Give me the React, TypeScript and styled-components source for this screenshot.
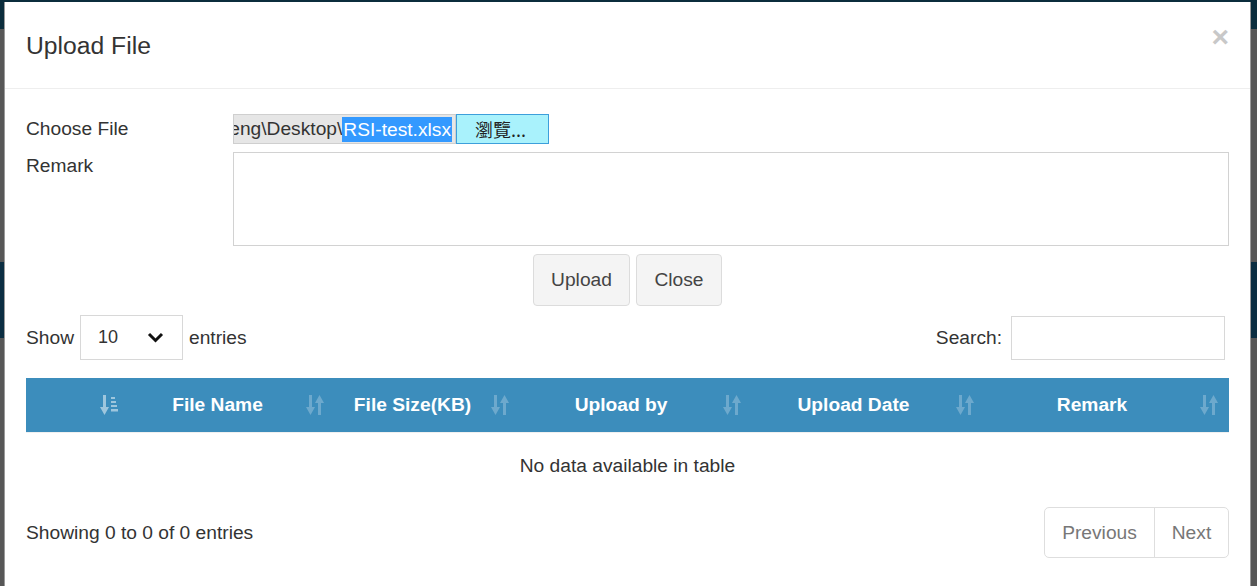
import React from "react";
import styled, { createGlobalStyle } from "styled-components";

const Global = createGlobalStyle`
  html, body { margin: 0; padding: 0; }
  body { font-family: "Liberation Sans", Arial, sans-serif; color: #333; }
  * { box-sizing: border-box; }
`;

const Backdrop = styled.div`
  height: 586px;
  overflow: hidden;
  padding: 2px 6px 0 4px;
  background: linear-gradient(
    to bottom,
    #0b2d3c 0px,
    #0b2d3c 29px,
    #575757 29px,
    #575757 262px,
    #0b2e42 262px,
    #0b2e42 338px,
    #575757 338px
  );
`;

const Modal = styled.div`
  height: 584px;
  background: #fff;
  border-left: 1px solid #9a9a9a;
  border-right: 1px solid #9a9a9a;
  display: flex;
  flex-direction: column;
`;

const Header = styled.div`
  height: 87px;
  border-bottom: 1px solid #eeeeee;
  padding: 0 21px 0 21px;
  display: flex;
  align-items: center;
  justify-content: space-between;
`;

const Title = styled.h4`
  margin: 0;
  font-size: 24.7px;
  font-weight: normal;
  color: #333;
  padding-top: 1px;
`;

const CloseX = styled.span`
  font-size: 30px;
  font-weight: bold;
  color: #c8c8c8;
  line-height: 1;
  margin-top: -16px;
`;

const Body = styled.div`
  padding: 25px 21px 0 21px;
  display: flex;
  flex-direction: column;
`;

const FormRow = styled.div<{ $gap?: number }>`
  display: flex;
  align-items: flex-start;
  margin-top: ${(p) => p.$gap ?? 0}px;
`;

const Label = styled.label<{ $lh: number }>`
  width: 207px;
  flex: none;
  font-size: 19.2px;
  line-height: ${(p) => p.$lh}px;
`;

const FileBox = styled.div`
  display: flex;
  height: 30px;
`;

const FilePath = styled.div`
  width: 223px;
  height: 30px;
  background: #e6e6e6;
  border: 1px solid #cfcfcf;
  display: flex;
  justify-content: flex-end;
  align-items: center;
  overflow: hidden;
  white-space: nowrap;
  font-size: 19.2px;
  padding-right: 3px;
`;

const Selected = styled.span`
  background: #3399ff;
  color: #fff;
  line-height: 25px;
  padding: 0 1px;
`;

const Browse = styled.button`
  width: 93px;
  height: 30px;
  background: #a9f2fc;
  border: 1.5px solid #3d9fdb;
  font-family: "Noto Sans CJK TC", "Liberation Sans", sans-serif;
  font-size: 18px;
  color: #222;
  padding: 0 4px 0 0;
  line-height: 1;
`;

const TextArea = styled.textarea`
  flex: 1;
  height: 94px;
  border: 1px solid #d2d2d2;
  resize: none;
  font-family: inherit;
`;

const ButtonRow = styled.div`
  display: flex;
  justify-content: center;
  gap: 6px;
  margin-top: 8px;
`;

const Btn = styled.button<{ $w: number }>`
  width: ${(p) => p.$w}px;
  height: 52px;
  background: #f4f4f4;
  border: 1px solid #dcdcdc;
  border-radius: 4px;
  font-family: inherit;
  font-size: 19.2px;
  color: #444;
  padding: 0;
`;

const Controls = styled.div`
  display: flex;
  justify-content: space-between;
  align-items: center;
  margin-top: 9px;
  height: 45px;
`;

const Inline = styled.div`
  display: flex;
  align-items: center;
  font-size: 19.2px;
`;

const SelectBox = styled.div`
  width: 103px;
  height: 45px;
  border: 1px solid #d8d8d8;
  margin: 0 6px;
  display: flex;
  align-items: center;
  justify-content: space-between;
  padding: 0 18px 0 17px;
  font-size: 18px;
`;

const SearchInput = styled.input`
  width: 214px;
  height: 44px;
  border: 1px solid #d8d8d8;
  margin: 0 4px 0 9px;
`;

const Table = styled.table`
  margin-top: 18px;
  width: 1203px;
  border-collapse: collapse;
  table-layout: fixed;
`;

const Th = styled.th`
  background: #3c8dbc;
  color: #fff;
  height: 54px;
  padding: 1px 10px 0 0;
  font-size: 19.2px;
  font-weight: bold;
  border-bottom: 1px solid #f0f0f0;
`;

const ThInner = styled.div`
  display: flex;
  align-items: center;
`;

const ThLabel = styled.span`
  flex: 1;
  text-align: center;
  white-space: nowrap;
`;

const Td = styled.td`
  height: 68px;
  text-align: center;
  font-size: 19.2px;
  padding: 0;
`;

const Footer = styled.div`
  display: flex;
  justify-content: space-between;
  align-items: center;
  margin-top: 7px;
  font-size: 19.2px;
`;

const Pager = styled.div`
  display: flex;
  height: 51px;
  border: 1px solid #dedede;
  border-radius: 5px;
`;

const PageBtn = styled.span<{ $w: number; $sep?: boolean }>`
  width: ${(p) => p.$w}px;
  display: flex;
  align-items: center;
  justify-content: center;
  color: #777;
  font-size: 19.2px;
  border-left: ${(p) => (p.$sep ? "1px solid #dedede" : "none")};
`;

const SortIcon = ({ active }: { active?: boolean }) =>
  active ? (
    <svg width="20" height="22" viewBox="0 0 20 22" style={{ flex: "none" }}>
      <g fill="#fff" opacity="0.5">
        <rect x="3" y="1" width="3" height="14" />
        <polygon points="0,13 9,13 4.5,21" />
        <rect x="11" y="3" width="4" height="2" />
        <rect x="11" y="7" width="5" height="2" />
        <rect x="11" y="11" width="6" height="2" />
        <rect x="11" y="15" width="7" height="2.5" />
      </g>
    </svg>
  ) : (
    <svg width="20" height="22" viewBox="0 0 20 22" style={{ flex: "none" }}>
      <g fill="#fff" opacity="0.25">
        <rect x="4" y="1" width="3" height="14" />
        <polygon points="1,13 10,13 5.5,21" />
        <rect x="13" y="7" width="3" height="14" />
        <polygon points="10,9 19,9 14.5,1" />
      </g>
    </svg>
  );

const Chevron = () => (
  <svg width="17" height="11" viewBox="0 0 17 11">
    <polyline points="2,2 8.5,8.5 15,2" fill="none" stroke="#111" strokeWidth="3" />
  </svg>
);

const columns = [
  { w: 104, label: "", active: true },
  { w: 205, label: "File Name" },
  { w: 185, label: "File Size(KB)" },
  { w: 232, label: "Upload by" },
  { w: 233, label: "Upload Date" },
  { w: 244, label: "Remark" },
];

export default function App() {
  return (
    <>
      <Global />
      <Backdrop>
        <Modal>
          <Header>
            <Title>Upload File</Title>
            <CloseX>×</CloseX>
          </Header>
          <Body>
            <FormRow>
              <Label $lh={30}>Choose File</Label>
              <FileBox>
                <FilePath>
                  <span>C:\Users\Cheng\Desktop\</span>
                  <Selected>RSI-test.xlsx</Selected>
                </FilePath>
                <Browse>瀏覽...</Browse>
              </FileBox>
            </FormRow>
            <FormRow $gap={8}>
              <Label $lh={28}>Remark</Label>
              <TextArea />
            </FormRow>
            <ButtonRow>
              <Btn $w={97}>Upload</Btn>
              <Btn $w={86}>Close</Btn>
            </ButtonRow>
            <Controls>
              <Inline>
                Show
                <SelectBox>
                  <span>10</span>
                  <Chevron />
                </SelectBox>
                entries
              </Inline>
              <Inline>
                Search:
                <SearchInput />
              </Inline>
            </Controls>
            <Table>
              <colgroup>
                {columns.map((c, i) => (
                  <col key={i} style={{ width: c.w }} />
                ))}
              </colgroup>
              <thead>
                <tr>
                  {columns.map((c, i) => (
                    <Th key={i}>
                      <ThInner>
                        <ThLabel>{c.label}</ThLabel>
                        <SortIcon active={c.active} />
                      </ThInner>
                    </Th>
                  ))}
                </tr>
              </thead>
              <tbody>
                <tr>
                  <Td colSpan={6}>No data available in table</Td>
                </tr>
              </tbody>
            </Table>
            <Footer>
              <span>Showing 0 to 0 of 0 entries</span>
              <Pager>
                <PageBtn $w={109}>Previous</PageBtn>
                <PageBtn $w={74} $sep>
                  Next
                </PageBtn>
              </Pager>
            </Footer>
          </Body>
        </Modal>
      </Backdrop>
    </>
  );
}
